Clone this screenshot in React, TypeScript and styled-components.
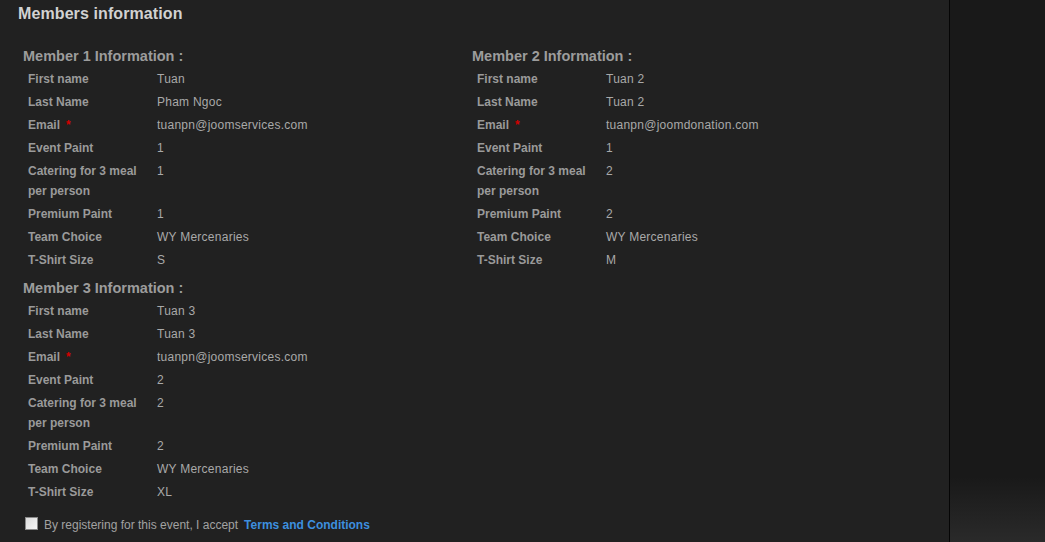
import React from 'react';
import styled, { createGlobalStyle } from 'styled-components';

const GlobalStyle = createGlobalStyle`
  html, body {
    margin: 0;
    padding: 0;
    background: #191919;
    overflow: hidden;
  }
  body {
    font-family: "Liberation Sans", Arial, sans-serif;
  }
`;

type Field = { label: string; value: string; required?: boolean };
type Member = { title: string; fields: Field[] };

const makeFields = (first: string, last: string, email: string, paint: string, catering: string, premium: string, size: string): Field[] => [
  { label: 'First name', value: first },
  { label: 'Last Name', value: last },
  { label: 'Email', value: email, required: true },
  { label: 'Event Paint', value: paint },
  { label: 'Catering for 3 meal per person', value: catering },
  { label: 'Premium Paint', value: premium },
  { label: 'Team Choice', value: 'WY Mercenaries' },
  { label: 'T-Shirt Size', value: size },
];

const members: Member[] = [
  { title: 'Member 1 Information :', fields: makeFields('Tuan', 'Pham Ngoc', 'tuanpn@joomservices.com', '1', '1', '1', 'S') },
  { title: 'Member 2 Information :', fields: makeFields('Tuan 2', 'Tuan 2', 'tuanpn@joomdonation.com', '1', '2', '2', 'M') },
  { title: 'Member 3 Information :', fields: makeFields('Tuan 3', 'Tuan 3', 'tuanpn@joomservices.com', '2', '2', '2', 'XL') },
];

export default function App() {
  return (
    <>
      <GlobalStyle />
      <Page>
        <Main>
          <Heading>Members information</Heading>
          <MemberGrid>
            {members.map((m) => (
              <MemberBlock key={m.title}>
                <MemberTitle>{m.title}</MemberTitle>
                {m.fields.map((f) => (
                  <FieldRow key={f.label}>
                    <Label>
                      {f.label}
                      {f.required && <Star>*</Star>}
                    </Label>
                    <Value>{f.value}</Value>
                  </FieldRow>
                ))}
              </MemberBlock>
            ))}
          </MemberGrid>
          <Accept>
            <Check type="checkbox" />
            <AcceptText>By registering for this event, I accept</AcceptText>
            <TermsLink href="#">Terms and Conditions</TermsLink>
          </Accept>
        </Main>
        <Side />
      </Page>
    </>
  );
}

const Page = styled.div`
  display: flex;
  width: 1045px;
  height: 542px;
  overflow: hidden;
`;

const Main = styled.div`
  width: 950px;
  flex-shrink: 0;
  background: #212121;
  border-right: 1px solid #050505;
  padding: 4px 0 0 18px;
  box-sizing: border-box;
`;

const Side = styled.div`
  flex: 1;
  background: linear-gradient(to bottom, #191919 0%, #191919 88%, #2a2a2a 100%);
`;

const Heading = styled.h2`
  margin: 0;
  font-size: 16px;
  line-height: 20px;
  font-weight: bold;
  letter-spacing: 0.1px;
  color: #d2d2d2;
`;

const MemberGrid = styled.div`
  display: grid;
  grid-template-columns: 449px 449px;
  row-gap: 5px;
  margin: 22px 0 0 5px;
`;

const MemberBlock = styled.div`
  display: flex;
  flex-direction: column;
`;

const MemberTitle = styled.h3`
  margin: 0 0 3px;
  font-size: 14.5px;
  line-height: 20px;
  font-weight: bold;
  color: #9c9c9c;
`;

const FieldRow = styled.div`
  display: grid;
  grid-template-columns: 129px 1fr;
  padding: 0 0 3px 5px;
  font-size: 12px;
  line-height: 20px;
`;

const Label = styled.div`
  font-weight: bold;
  color: #9a9a9a;
  padding-right: 10px;
`;

const Star = styled.span`
  color: #d40000;
  margin-left: 6px;
`;

const Value = styled.div`
  color: #a9a9a9;
  letter-spacing: 0.25px;
`;

const Accept = styled.div`
  display: flex;
  align-items: center;
  margin: 10px 0 0 7px;
  font-size: 12px;
  line-height: 20px;
`;

const Check = styled.input`
  appearance: none;
  width: 13px;
  height: 13px;
  margin: 0 6px 4px 0;
  border: 1px solid #8a8a8a;
  background: linear-gradient(135deg, #dcdcdc, #f6f6f6);
  box-sizing: border-box;
`;

const AcceptText = styled.span`
  color: #a2a2a2;
  margin-right: 6px;
`;

const TermsLink = styled.a`
  color: #3d8fdf;
  font-weight: bold;
  text-decoration: none;
`;
